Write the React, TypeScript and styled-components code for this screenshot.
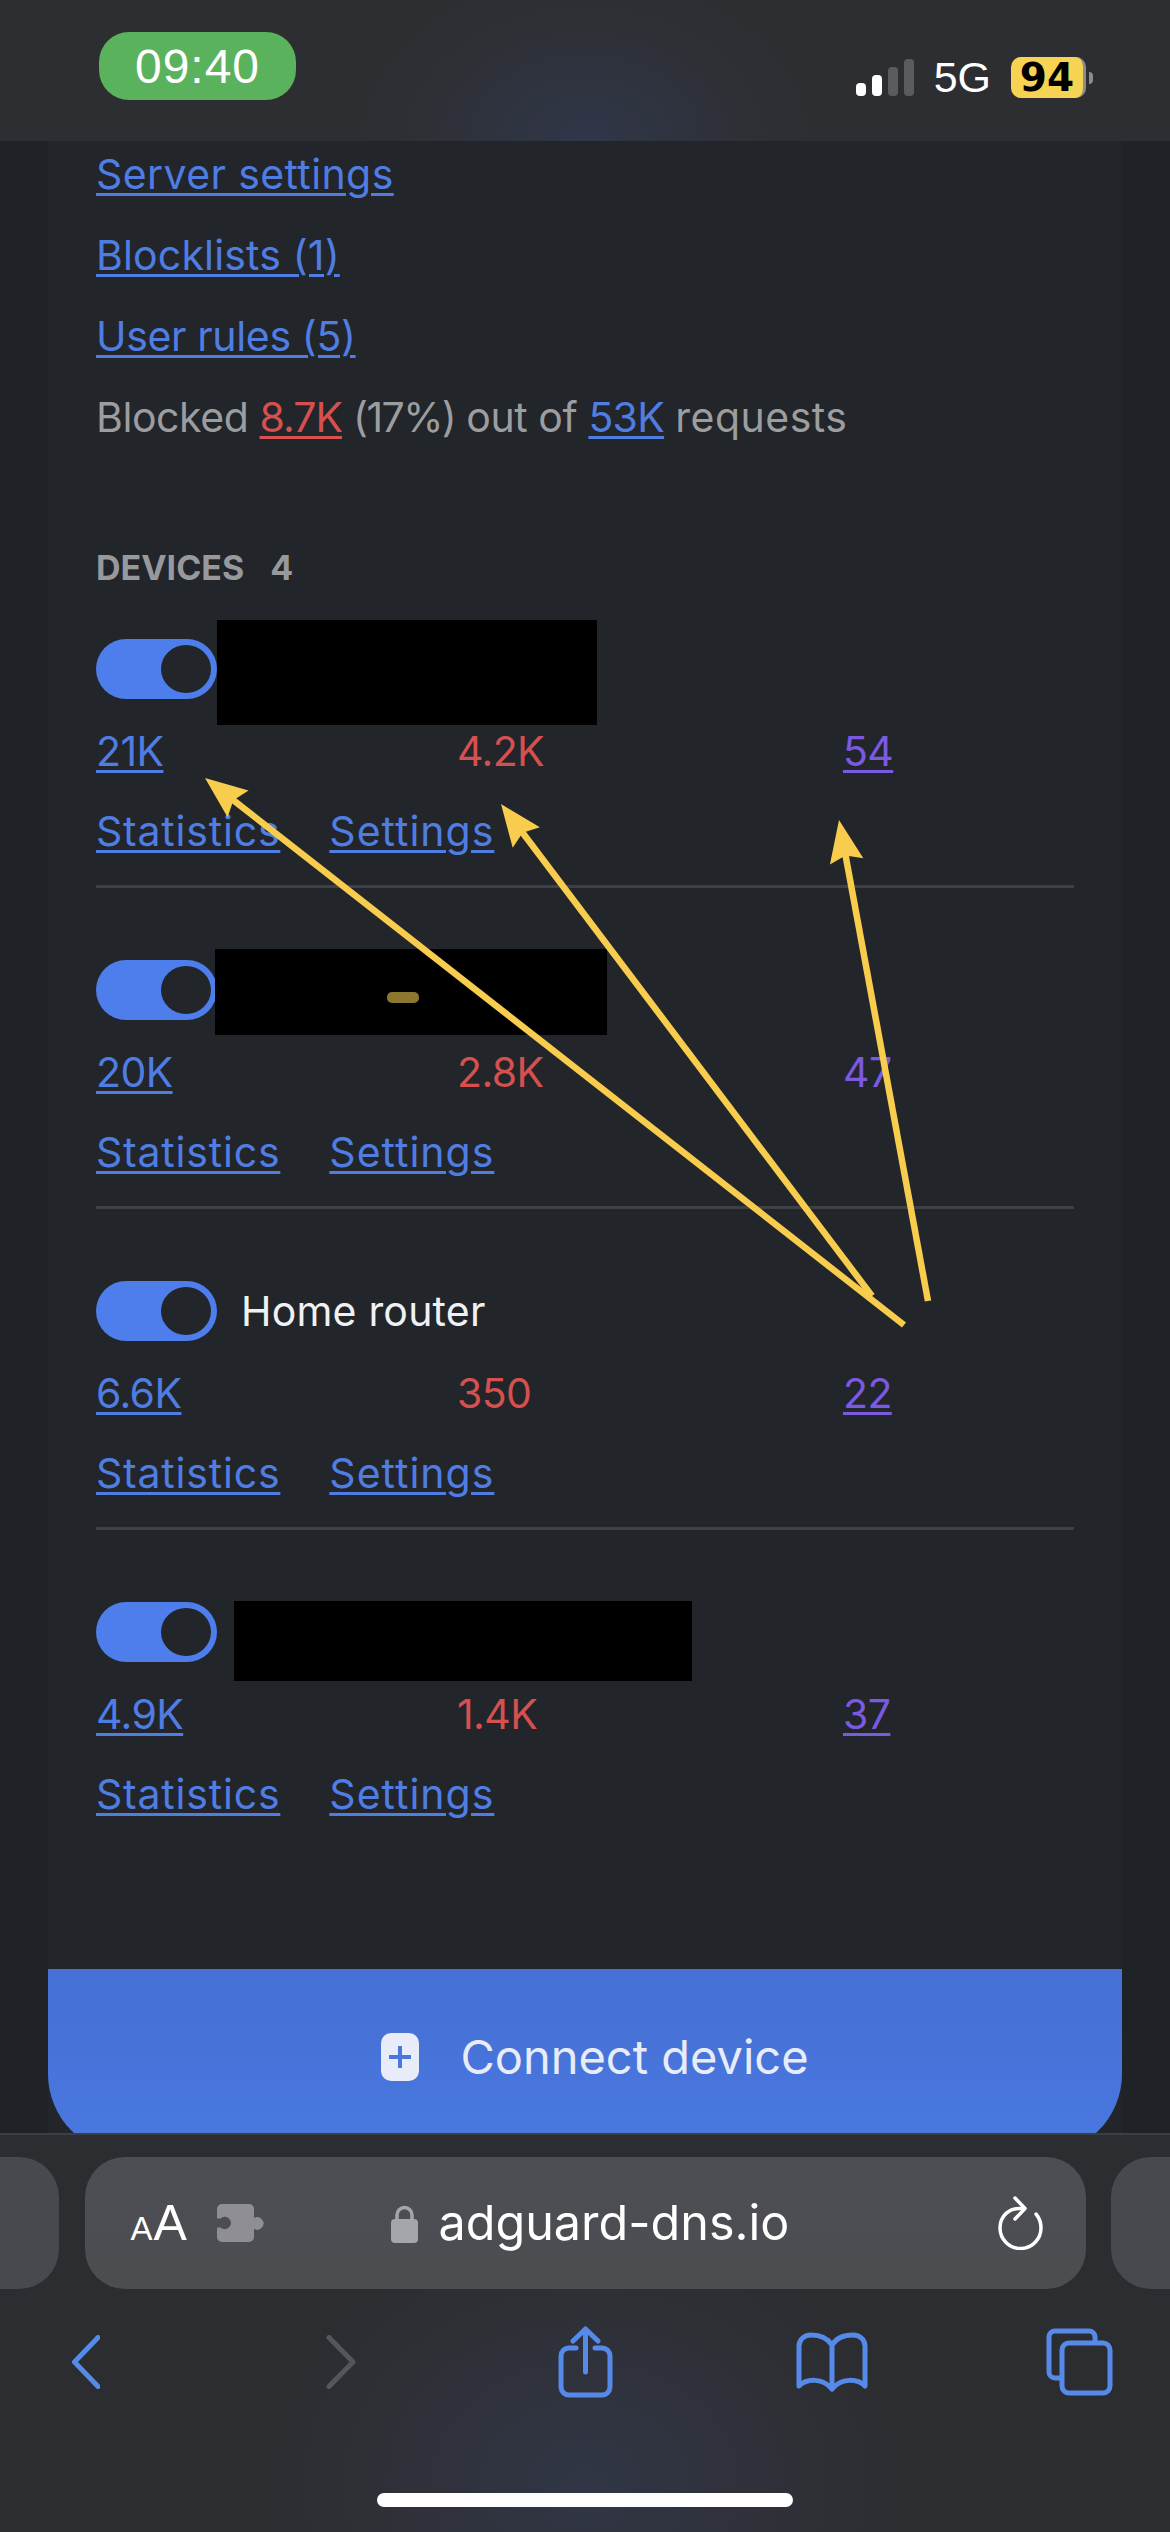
import React from 'react';
import styled, {createGlobalStyle} from 'styled-components';

const FONT = `Inter, "Liberation Sans", sans-serif`;
const BLUE = '#4f7de2';
const RED = '#d6504f';
const PURPLE = '#7a5ae0';
const ARROW = '#f8cd4e';

const GlobalStyle = createGlobalStyle`
  html, body {
    margin: 0;
    padding: 0;
    background: #1f2226;
  }
`;

const Page = styled.div`
  position: relative;
  width: 1170px;
  height: 2532px;
  display: flex;
  flex-direction: column;
  overflow: hidden;
  font-family: ${FONT};
`;

/* status bar */
const StatusBar = styled.header`
  flex: 0 0 141px;
  display: flex;
  justify-content: space-between;
  align-items: flex-start;
  box-sizing: border-box;
  padding: 32px 77px 0 99px;
  background: radial-gradient(ellipse 230px 170px at 50% 100%, #31374a 0%, #2e3036 70%, #2d2e32 100%);
`;

const TimePill = styled.div`
  width: 197px;
  height: 68px;
  border-radius: 30px;
  background: #5ab35c;
  color: #fff;
  display: flex;
  align-items: center;
  justify-content: center;
  font-family: "Liberation Sans", sans-serif;
  font-size: 48px;
  letter-spacing: 1px;
`;

const StatusRight = styled.div`
  display: flex;
  align-items: center;
  margin-top: 25px;
`;

const SignalBars = styled.div`
  display: flex;
  align-items: flex-end;
  gap: 6px;
  height: 37px;
  margin-right: 20px;
`;

const SignalBar = styled.span<{$h: number; $on?: boolean}>`
  width: 10px;
  height: ${p => p.$h}px;
  border-radius: 4px;
  background: ${p => (p.$on ? '#fff' : '#5b5c60')};
`;

const NetworkLabel = styled.span`
  font-family: "Liberation Sans", sans-serif;
  font-size: 43px;
  line-height: 41px;
  color: #fff;
  margin-right: 20px;
`;

const Battery = styled.div`
  box-sizing: border-box;
  width: 75px;
  height: 41px;
  border-radius: 10px;
  border-right: 3px solid #8c8c8c;
  background: #f7d353;
  color: #000;
  display: flex;
  align-items: center;
  justify-content: center;
  font-family: "DejaVu Sans", sans-serif;
  font-weight: 700;
  font-size: 39px;
`;

const BatteryTip = styled.span`
  width: 4px;
  height: 12px;
  margin-left: 3px;
  border-radius: 0 6px 6px 0;
  background: #8c8c8c;
`;

/* page content */
const Main = styled.main`
  flex: 1;
  min-height: 0;
  overflow: hidden;
  padding: 0 48px;
`;

const Panel = styled.div`
  background: #22252a;
  height: 100%;
  display: flex;
  flex-direction: column;
`;

const Body = styled.div`
  padding: 0 48px;
`;

const MenuList = styled.div`
  margin-top: -1px;
  display: flex;
  flex-direction: column;
  gap: 13px;
`;

const Line = styled.div<{$ls?: number}>`
  height: 68px;
  line-height: 68px;
  font-size: 41px;
  letter-spacing: ${p => p.$ls || 0}px;
  color: #9c9d9f;
  white-space: nowrap;
`;

const Spaced = styled.span<{$ls: number}>`
  letter-spacing: ${p => p.$ls}px;
`;

const TextLink = styled.a<{$color?: string; $ls?: number}>`
  color: ${p => p.$color || BLUE};
  text-decoration: underline;
  text-decoration-thickness: 3px;
  text-underline-offset: 4px;
  ${p => (p.$ls !== undefined ? `letter-spacing: ${p.$ls}px;` : '')}
`;

const SectionTitle = styled.div`
  margin-top: 97px;
  height: 40px;
  line-height: 40px;
  font-size: 34px;
  font-weight: 700;
  color: #97999c;
  display: flex;
  gap: 26px;
`;

const DeviceList = styled.div`
  margin-top: 51px;
  display: flex;
  flex-direction: column;
`;

const Device = styled.section<{$last?: boolean}>`
  padding-bottom: ${p => (p.$last ? 0 : 20)}px;
  margin-bottom: ${p => (p.$last ? 0 : 72)}px;
  border-bottom: ${p => (p.$last ? 'none' : '3px solid #3d4045')};
`;

const DeviceHead = styled.div`
  height: 60px;
  display: flex;
  align-items: center;
`;

const Toggle = styled.span`
  flex: 0 0 121px;
  box-sizing: border-box;
  height: 60px;
  padding: 6px;
  border-radius: 30px;
  background: #4d7eec;
  display: flex;
  justify-content: flex-end;
`;

const ToggleKnob = styled.span`
  width: 50px;
  height: 48px;
  border-radius: 50%;
  background: #22252a;
`;

const DeviceName = styled.span`
  margin-left: 24px;
  font-size: 41px;
  letter-spacing: 0.2px;
  color: #f0f1f2;
`;

const Redaction = styled.div<{$w: number; $h: number; $left: number; $shift?: number}>`
  flex: 0 0 ${p => p.$w}px;
  height: ${p => p.$h}px;
  margin-left: ${p => p.$left}px;
  margin-top: ${p => p.$shift || 0}px;
  background: #000;
  display: flex;
  align-items: center;
  justify-content: center;
`;

const Smudge = styled.span`
  width: 32px;
  height: 11px;
  margin: 12px 16px 0 0;
  border-radius: 5px;
  background: #8c7730;
`;

const StatRow = styled.div`
  margin-top: 18px;
  display: grid;
  grid-template-columns: 361px 386px 1fr;
`;

const ActionRow = styled.div`
  margin-top: 12px;
  display: flex;
  gap: 49px;
`;

const ConnectButton = styled.button`
  margin-top: 141px;
  flex: 0 0 185px;
  border: none;
  border-radius: 0 0 80px 80px;
  padding: 0 0 10px 20px;
  background: linear-gradient(180deg, #4570d4 0%, #4a78e0 100%);
  display: flex;
  align-items: center;
  justify-content: center;
  gap: 41px;
  color: #e8ecf8;
  font-family: ${FONT};
  font-size: 47px;
`;

const PlusBadge = styled.span`
  width: 38px;
  height: 48px;
  border-radius: 10px;
  background: #e8ecf8;
  display: flex;
  align-items: center;
  justify-content: center;
`;

/* safari bottom bar */
const BrowserBar = styled.footer`
  flex: 0 0 399px;
  box-sizing: border-box;
  border-top: 2px solid #3b3e44;
  padding-top: 22px;
  background: radial-gradient(ellipse 320px 260px at 50% 88%, #313646 0%, #2e3036 70%, #2b2d31 100%);
  display: flex;
  flex-direction: column;
`;

const TabStrip = styled.div`
  display: flex;
  justify-content: space-between;
  height: 132px;
`;

const SideTab = styled.div<{$side: 'left' | 'right'}>`
  width: 59px;
  background: #47494e;
  border-radius: ${p => (p.$side === 'left' ? '0 40px 40px 0' : '40px 0 0 40px')};
`;

const AddressBar = styled.div`
  width: 1001px;
  box-sizing: border-box;
  padding: 0 43px 0 46px;
  border-radius: 40px;
  background: linear-gradient(180deg, #4b4e54 0%, #4c4d51 100%);
  display: flex;
  align-items: center;
`;

const ReaderButton = styled.span`
  display: flex;
  align-items: baseline;
  gap: 1px;
  width: 86px;
  color: #fff;
  font-family: "Liberation Sans", sans-serif;
  line-height: 1;
`;

const SmallA = styled.span`
  font-size: 33px;
`;

const BigA = styled.span`
  font-size: 50px;
`;

const UrlGroup = styled.div`
  margin-left: 127px;
  display: flex;
  align-items: center;
  gap: 21px;
`;

const UrlText = styled.span`
  color: #fff;
  font-size: 48.500px;
  line-height: 1;
`;

const ReloadSlot = styled.span`
  margin-left: auto;
  display: flex;
`;

const Toolbar = styled.nav`
  margin-top: 37px;
  height: 72px;
  padding-left: 72px;
  display: flex;
  align-items: center;
`;

const ToolIcon = styled.svg<{$gap?: number; $muted?: boolean}>`
  flex: none;
  margin-left: ${p => p.$gap || 0}px;
  fill: none;
  stroke: ${p => (p.$muted ? '#55565a' : '#568ae8')};
  stroke-width: 5;
  stroke-linecap: round;
  stroke-linejoin: round;
`;

const HomeIndicator = styled.div`
  width: 416px;
  height: 14px;
  margin: 95px auto 0;
  border-radius: 7px;
  background: #fff;
`;

const ArrowLayer = styled.svg`
  position: absolute;
  left: 0;
  top: 0;
  pointer-events: none;
`;

const devices = [
    {name: null, hits: '21K', blocked: '4.2K', companies: '54', w: 380, h: 105, left: 0, shift: 6},
    {name: null, hits: '20K', blocked: '2.8K', companies: '47', w: 392, h: 86, left: -2, shift: 3, smudge: true, plain: true},
    {name: 'Home router', hits: '6.6K', blocked: '350', companies: '22', w: 0, h: 0, left: 0},
    {name: null, hits: '4.9K', blocked: '1.4K', companies: '37', w: 458, h: 80, left: 17, shift: 18},
];

const arrows = [
    {x1: 904, y1: 1325, x2: 205, y2: 778},
    {x1: 872, y1: 1296, x2: 501, y2: 804},
    {x1: 928, y1: 1301, x2: 839, y2: 820},
];

function Arrow({x1, y1, x2, y2}: {x1: number; y1: number; x2: number; y2: number}) {
    const a = Math.atan2(y2 - y1, x2 - x1);
    const ux = Math.cos(a);
    const uy = Math.sin(a);
    const back = 42;
    const half = 17;
    const bx = x2 - ux * back;
    const by = y2 - uy * back;
    const nx = x2 - ux * (back - 6);
    const ny = y2 - uy * (back - 6);
    const points = `${x2},${y2} ${bx - uy * half},${by + ux * half} ${nx},${ny} ${bx + uy * half},${by - ux * half}`;
    return (
        <>
            <line x1={x1} y1={y1} x2={x2 - ux * 20} y2={y2 - uy * 20} stroke={ARROW} strokeWidth={6.5}/>
            <polygon points={points} fill={ARROW}/>
        </>
    );
}

function App() {
    return (
        <Page>
            <GlobalStyle/>
            <StatusBar>
                <TimePill>09:40</TimePill>
                <StatusRight>
                    <SignalBars>
                        <SignalBar $h={13} $on/>
                        <SignalBar $h={21} $on/>
                        <SignalBar $h={29}/>
                        <SignalBar $h={37}/>
                    </SignalBars>
                    <NetworkLabel>5G</NetworkLabel>
                    <Battery>94</Battery>
                    <BatteryTip/>
                </StatusRight>
            </StatusBar>

            <Main>
                <Panel>
                    <Body>
                        <MenuList>
                            <Line $ls={0.4}><TextLink>Server settings</TextLink></Line>
                            <Line $ls={0.16}><TextLink>Blocklists (1)</TextLink></Line>
                            <Line $ls={-0.35}><TextLink>User rules (5)</TextLink></Line>
                            <Line $ls={-0.42}>
                                Blocked <TextLink $color={RED} $ls={-1}>8.7K</TextLink> <Spaced $ls={-1.6}>(17%)</Spaced> out of <TextLink $ls={-0.7}>53K</TextLink> <Spaced $ls={0.5}>requests</Spaced>
                            </Line>
                        </MenuList>

                        <SectionTitle><span>DEVICES</span><span>4</span></SectionTitle>

                        <DeviceList>
                            {devices.map((d, key) => (
                                <Device key={key} $last={key === devices.length - 1}>
                                    <DeviceHead>
                                        <Toggle><ToggleKnob/></Toggle>
                                        {d.name
                                            ? <DeviceName>{d.name}</DeviceName>
                                            : <Redaction $w={d.w} $h={d.h} $left={d.left} $shift={d.shift}>
                                                {d.smudge && <Smudge/>}
                                            </Redaction>}
                                    </DeviceHead>
                                    <StatRow>
                                        <Line $ls={-0.6}><TextLink>{d.hits}</TextLink></Line>
                                        <Line $ls={-0.6}><span style={{color: RED}}>{d.blocked}</span></Line>
                                        <Line $ls={-0.6}>
                                            {d.plain
                                                ? <span style={{color: PURPLE}}>{d.companies}</span>
                                                : <TextLink $color={PURPLE}>{d.companies}</TextLink>}
                                        </Line>
                                    </StatRow>
                                    <ActionRow>
                                        <Line $ls={0.8}><TextLink>Statistics</TextLink></Line>
                                        <Line $ls={1}><TextLink>Settings</TextLink></Line>
                                    </ActionRow>
                                </Device>
                            ))}
                        </DeviceList>
                    </Body>

                    <ConnectButton>
                        <PlusBadge>
                            <svg width="24" height="24" viewBox="0 0 24 24">
                                <path d="M12 1v22M1 12h22" stroke="#4a76dd" strokeWidth="4"/>
                            </svg>
                        </PlusBadge>
                        Connect device
                    </ConnectButton>
                </Panel>
            </Main>

            <BrowserBar>
                <TabStrip>
                    <SideTab $side="left"/>
                    <AddressBar>
                        <ReaderButton><SmallA>A</SmallA><BigA>A</BigA></ReaderButton>
                        <svg width="47" height="38" viewBox="0 0 47 38">
                            <path fill="#8e8e93" fillRule="evenodd" d="M5 0h27a5 5 0 0 1 5 5v9.200a6.200 6.200 0 1 1 0 10.600V33a5 5 0 0 1-5 5H5a5 5 0 0 1-5-5V23.500h3.500a6.200 6.200 0 1 0 0-9H0V5a5 5 0 0 1 5-5z"/>
                        </svg>
                        <UrlGroup>
                            <svg width="27" height="39" viewBox="0 0 27 39">
                                <path d="M6 17V11a7.500 7.500 0 0 1 15 0v6" fill="none" stroke="#a5a6ab" strokeWidth="3.500"/>
                                <rect x="0" y="15" width="27" height="24" rx="4" fill="#a5a6ab"/>
                            </svg>
                            <UrlText>adguard-dns.io</UrlText>
                        </UrlGroup>
                        <ReloadSlot>
                            <svg width="45" height="54" viewBox="0 0 45 54" fill="none" stroke="#fff" strokeWidth="3.500" strokeLinecap="round" strokeLinejoin="round">
                                <path d="M24 12.500C11 11.500 2 20 2 32a20.500 20.500 0 0 0 41 0c0-6-2-10.500-5-14"/>
                                <path d="M17 2l10 10.500L17 23"/>
                            </svg>
                        </ReloadSlot>
                    </AddressBar>
                    <SideTab $side="right"/>
                </TabStrip>

                <Toolbar>
                    <ToolIcon width="28" height="54" viewBox="0 0 28 54">
                        <path d="M26 2.500L2.500 27 26 51.500"/>
                    </ToolIcon>
                    <ToolIcon $gap={226} $muted width="30" height="54" viewBox="0 0 30 54">
                        <path d="M3 2.500L27 27 3 51.500"/>
                    </ToolIcon>
                    <ToolIcon $gap={202} width="55" height="72" viewBox="0 0 55 72">
                        <path d="M18 22H11a8 8 0 0 0-8 8v31a8 8 0 0 0 8 8h33a8 8 0 0 0 8-8V30a8 8 0 0 0-8-8h-7"/>
                        <path d="M27.500 46V3M15 15L27.500 3 40 15"/>
                    </ToolIcon>
                    <ToolIcon $gap={183} width="72" height="60" viewBox="0 0 72 60">
                        <path d="M36 13C31 5 23 3 15 3 9 3 3 7 3 14v40c8-8 24-8 33 3 9-11 25-11 33-3V14c0-7-6-11-12-11-8 0-16 2-21 10z"/>
                        <path d="M36 13v44"/>
                    </ToolIcon>
                    <ToolIcon $gap={178} width="67" height="68" viewBox="0 0 67 68">
                        <path d="M14 50H9a6 6 0 0 1-6-6V9a6 6 0 0 1 6-6h34a6 6 0 0 1 6 6v5"/>
                        <rect x="16" y="15" width="48" height="50" rx="7"/>
                    </ToolIcon>
                </Toolbar>

                <HomeIndicator/>
            </BrowserBar>

            <ArrowLayer width="1170" height="2532" viewBox="0 0 1170 2532">
                {arrows.map((a, key) => <Arrow key={key} {...a}/>)}
            </ArrowLayer>
        </Page>
    );
}

export default App;
